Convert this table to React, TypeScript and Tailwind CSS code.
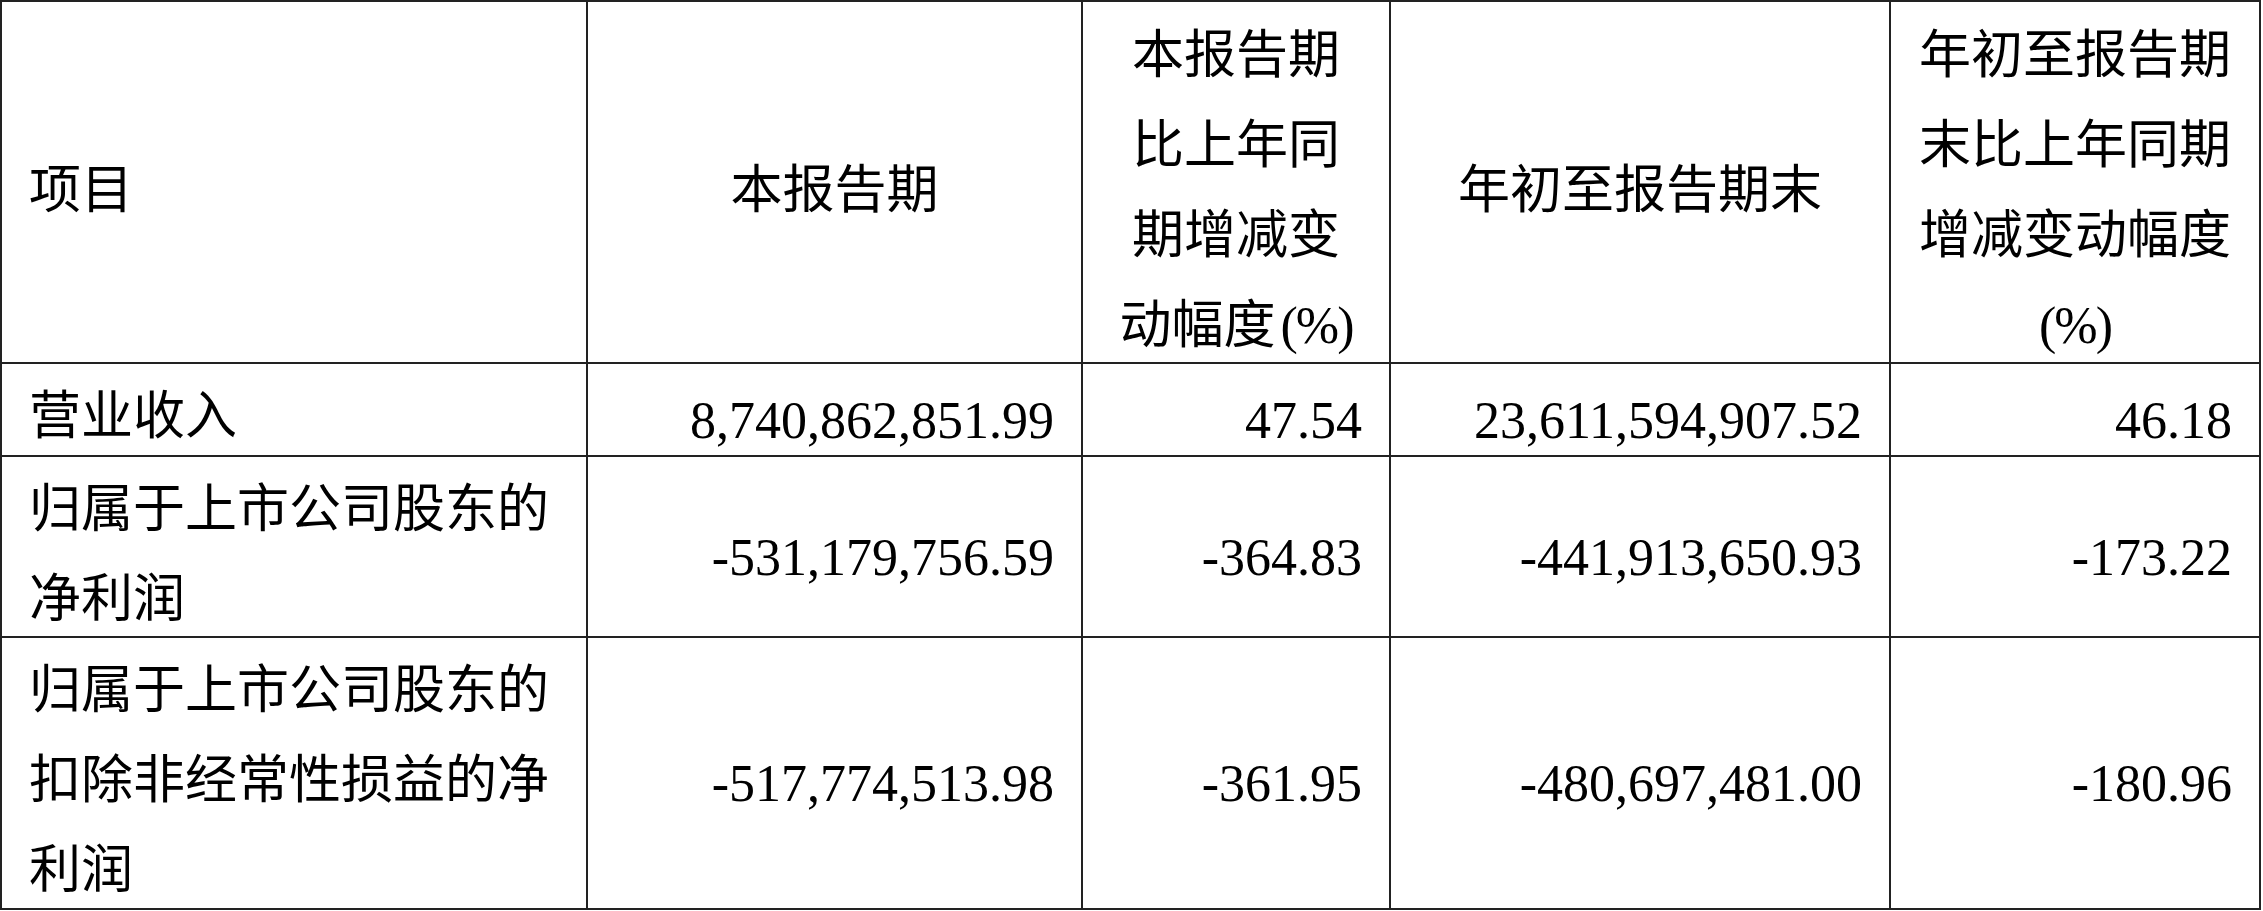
import React from "react";

const font = { fontFamily: "'Liberation Serif', 'Noto Sans CJK SC', serif" };

function HeadCell({ children, left = false }: { children: React.ReactNode; left?: boolean }) {
  return (
    <div
      className={`bg-white flex items-center pt-[18px] text-[52px] leading-[90px] text-black ${
        left ? "justify-start pl-[27px]" : "justify-center text-center"
      }`}
    >
      <div>{children}</div>
    </div>
  );
}

function LabelCell({ children }: { children: React.ReactNode }) {
  return (
    <div className="bg-white pl-[27px] pt-[8px] text-[52px] leading-[90px] text-black whitespace-nowrap">
      {children}
    </div>
  );
}

function NumCell({ children }: { children: React.ReactNode }) {
  return (
    <div className="bg-white flex items-center justify-end pr-[27px] pt-[22px] text-[52px] leading-[90px] text-black whitespace-nowrap">
      {children}
    </div>
  );
}

function Pct({ gap = false }: { gap?: boolean }) {
  return (
    <span className={`tracking-[-2px] ${gap ? "ml-[5px]" : ""}`}>(%)</span>
  );
}

export default function App() {
  return (
    <div className="w-[2263px] h-[911px] bg-white" style={font}>
      <div className="w-[2261px] bg-[#222222] p-[2px] grid gap-[2px] grid-cols-[584px_493px_306px_498px_368px] grid-rows-[360px_91px_179px_270px]">
        <HeadCell left>项目</HeadCell>
        <HeadCell>本报告期</HeadCell>
        <HeadCell>
          本报告期
          <br />
          比上年同
          <br />
          期增减变
          <br />
          动幅度<Pct gap />
        </HeadCell>
        <HeadCell>年初至报告期末</HeadCell>
        <HeadCell>
          年初至报告期
          <br />
          末比上年同期
          <br />
          增减变动幅度
          <br />
          <Pct />
        </HeadCell>

        <LabelCell>营业收入</LabelCell>
        <NumCell>8,740,862,851.99</NumCell>
        <NumCell>47.54</NumCell>
        <NumCell>23,611,594,907.52</NumCell>
        <NumCell>46.18</NumCell>

        <LabelCell>
          归属于上市公司股东的
          <br />
          净利润
        </LabelCell>
        <NumCell>-531,179,756.59</NumCell>
        <NumCell>-364.83</NumCell>
        <NumCell>-441,913,650.93</NumCell>
        <NumCell>-173.22</NumCell>

        <LabelCell>
          归属于上市公司股东的
          <br />
          扣除非经常性损益的净
          <br />
          利润
        </LabelCell>
        <NumCell>-517,774,513.98</NumCell>
        <NumCell>-361.95</NumCell>
        <NumCell>-480,697,481.00</NumCell>
        <NumCell>-180.96</NumCell>
      </div>
    </div>
  );
}
